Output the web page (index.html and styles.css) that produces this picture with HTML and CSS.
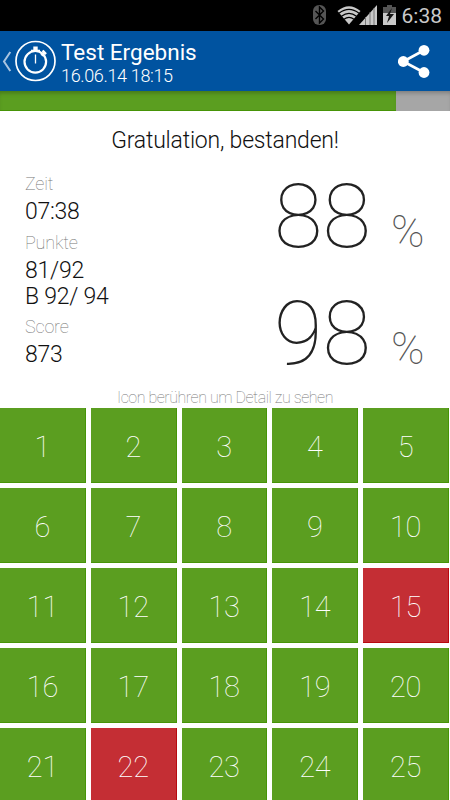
FILE: index.html
```html
<!DOCTYPE html>
<html lang="de">
<head>
<meta charset="utf-8">
<title>Test Ergebnis</title>
<link rel="stylesheet" href="styles.css">
</head>
<body>
<div class="status">
  <svg class="status-icons" width="100" height="31" viewBox="0 0 100 31">
    <rect x="3" y="5" width="13" height="20" rx="6" fill="#555"/>
    <path d="M5.500 11l8 8-4 4V7l4 4-8 8" fill="none" stroke="#000" stroke-width="1.400"/>
    <path d="M27.500 11Q39 1.500 50.500 11L39 24.500Z" fill="#c9c9c9"/>
    <path d="M29 13.300Q39 5.500 49 13.300M31.500 16.300Q39 10.500 46.500 16.300M34 19.300Q39 15.500 44 19.300" fill="none" stroke="#000" stroke-width="1.200"/>
    <path d="M49 25L67 5v20z" fill="#c9c9c9"/>
    <path d="M55.500 17v8M60 12v13M64 8v17" stroke="#777" stroke-width="1"/>
    <path d="M73 7h4V5h5v2h4v18H73z" fill="#c9c9c9"/>
    <path d="M73 7h4V5h5v2h4v6H73z" fill="#555"/>
    <path d="M82 8l-6 8h3l-2 7 7-9h-4z" fill="#151515"/>
  </svg>
  <span class="clock">6:38</span>
</div>
<header class="bar">
  <svg class="logo" width="60" height="60" viewBox="0 0 60 60" fill="none" stroke="#fff">
    <path d="M10.300 21L4 30.500l6.300 9.500" stroke="#a9c4e0" stroke-width="2"/>
    <circle cx="35.500" cy="30" r="19.500" stroke-width="1.700"/>
    <circle cx="35.300" cy="30.800" r="10.800" stroke-width="2.200"/>
    <path d="M35.500 23.500v9" stroke-width="1.300"/>
    <path d="M35.500 15.500v5" stroke-width="4.400"/>
    <path d="M31 19.500h9" stroke-width="1.600"/>
    <path d="M41.500 24.500l3-3.200" stroke-width="2.800"/>
    <path d="M42.600 19.500l3.400 3.600" stroke-width="2.400"/>
  </svg>
  <div class="titles">
    <div class="title">Test Ergebnis</div>
    <div class="date">16.06.14 18:15</div>
  </div>
  <svg class="share" width="34" height="36" viewBox="0 0 34 36" fill="#fff">
    <path d="M26 7.300L5.300 18.500 26 29.500" fill="none" stroke="#fff" stroke-width="2.700"/>
    <circle cx="26" cy="7.300" r="5.400"/><circle cx="5.300" cy="18.500" r="5.400"/><circle cx="26" cy="29.500" r="5.400"/>
  </svg>
</header>
<div class="progress"><div class="progress-fill"></div></div>
<h1 class="headline">Gratulation, bestanden!</h1>
<section class="result">
  <dl class="facts">
    <dt>Zeit</dt><dd>07:38</dd>
    <dt>Punkte</dt><dd>81/92</dd><dd>B 92/ 94</dd>
    <dt>Score</dt><dd>873</dd>
  </dl>
  <div class="rates">
    <div class="rate"><span class="num">88</span><span class="pct">%</span></div>
    <div class="rate"><span class="num">98</span><span class="pct">%</span></div>
  </div>
</section>
<p class="hint">Icon berühren um Detail zu sehen</p>
<main class="grid">
  <div class="tile">1</div><div class="tile">2</div><div class="tile">3</div><div class="tile">4</div><div class="tile">5</div>
  <div class="tile">6</div><div class="tile">7</div><div class="tile">8</div><div class="tile">9</div><div class="tile">10</div>
  <div class="tile">11</div><div class="tile">12</div><div class="tile">13</div><div class="tile">14</div><div class="tile wrong">15</div>
  <div class="tile">16</div><div class="tile">17</div><div class="tile">18</div><div class="tile">19</div><div class="tile">20</div>
  <div class="tile">21</div><div class="tile wrong">22</div><div class="tile">23</div><div class="tile">24</div><div class="tile">25</div>
</main>
</body>
</html>
```
FILE: styles.css
```css
* { box-sizing: border-box; margin: 0; padding: 0; }
body {
  width: 450px;
  height: 800px;
  overflow: hidden;
  background: #fff;
  color: #111;
  font-family: Roboto, "Liberation Sans", sans-serif;
  font-weight: 300;
}
.status {
  display: flex;
  justify-content: flex-end;
  height: 31px;
  padding-right: 8px;
  background: #000;
}
.status-icons { margin-right: -12px; }
.clock {
  width: 44px;
  color: #c9c9c9;
  font-size: 21px;
  font-weight: 400;
  line-height: 33px;
  text-align: right;
}
.bar {
  display: flex;
  align-items: flex-start;
  height: 60px;
  background: #0053a0;
  color: #fff;
}
.titles { flex: 1; padding: 8px 0 0 1px; }
.title { font-size: 22.5px; font-weight: 400; line-height: 27px; }
.date { font-size: 18px; line-height: 20px; letter-spacing: -.35px; }
.share { margin: 12px 18px 0 0; }
.progress {
  height: 20px;
  background: #a6a6a6;
  box-shadow: inset 0 4px 4px -2px rgba(0, 0, 0, .25);
}
.progress-fill {
  width: 396px;
  height: 20px;
  background: #5b9e20;
  border-bottom: 1px solid #469407;
  box-shadow: inset 0 4px 4px -2px rgba(0, 0, 0, .25);
}
.headline {
  height: 57px;
  font-size: 23px;
  font-weight: 300;
  line-height: 59px;
  letter-spacing: -.2px;
  text-align: center;
}
.result { display: flex; height: 217px; }
.facts { width: 250px; padding: 4px 0 0 25px; }
dt {
  height: 24px;
  color: #777;
  font-size: 18px;
  font-weight: 100;
  line-height: 24px;
  letter-spacing: -.2px;
}
dd { height: 26.500px; font-size: 23px; line-height: 31px; letter-spacing: -.25px; }
dt + dd { height: 34.500px; }
dt + dd:has(+ dd) { height: 26.500px; }
dd + dd { height: 34px; }
.rates { flex: 1; padding: 1px 0 0 24px; }
.rate { display: flex; align-items: baseline; height: 117px; }
.num {
  width: 117px;
  color: #222;
  font-size: 88.500px;
  font-weight: 100;
  line-height: 96px;
}
.pct { color: #555; font-size: 45px; font-weight: 100; }
.hint {
  height: 23.300px;
  color: #777;
  font-size: 16px;
  font-weight: 100;
  line-height: 25px;
  letter-spacing: -.45px;
  text-align: center;
}
.grid {
  display: grid;
  grid-template-columns: repeat(5, 1fr);
  grid-auto-rows: 75px;
  gap: 5px;
  padding-right: 1px;
}
.tile {
  display: flex;
  align-items: center;
  justify-content: center;
  padding-top: 3px;
  background: #5b9e20;
  border-right: 1px solid #469407;
  border-bottom: 1px solid #469407;
  color: #fff;
  font-size: 29px;
  font-weight: 100;
  letter-spacing: -.3px;
}
.wrong { background: #c42e34; border-color: #b8090f; }
```
